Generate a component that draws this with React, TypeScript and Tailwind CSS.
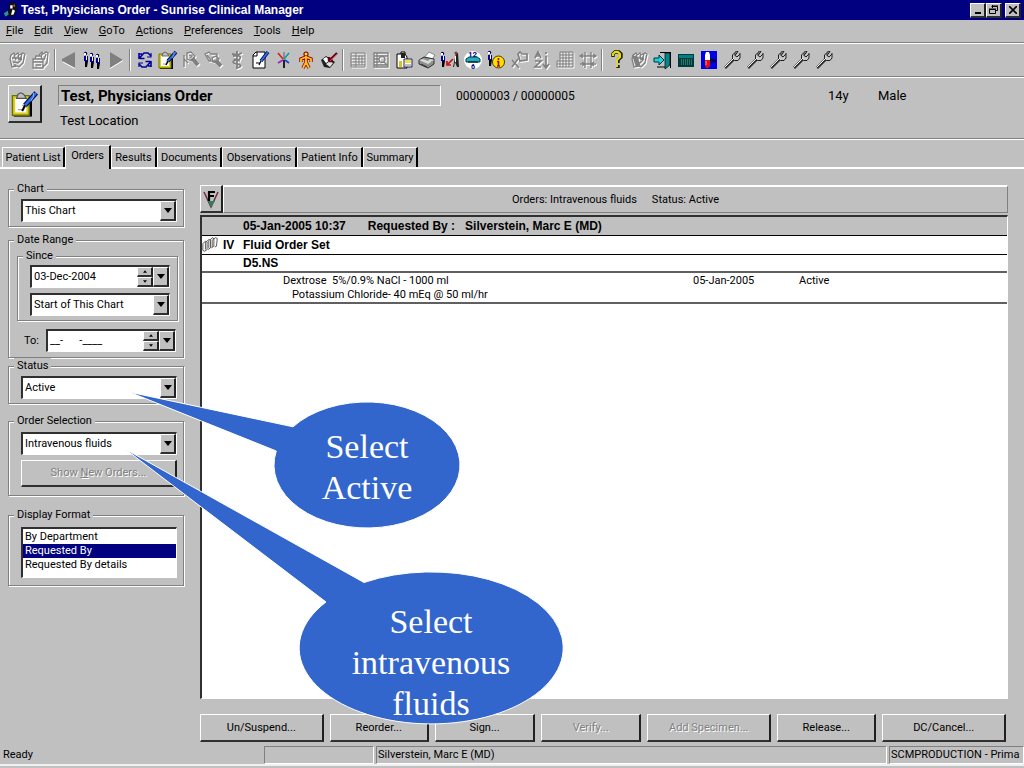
import { useState, type ReactNode } from "react";

const raised =
  "border-t border-l border-r-2 border-b-2 border-t-white border-l-white border-r-[#202020] border-b-[#303030] bg-[#c0c0c0]";
const sunken =
  "border-t-2 border-l-2 border-r border-b border-t-[#303030] border-l-[#303030] border-r-white border-b-white bg-white";
const rule = "border-b border-b-[#808080] shadow-[0_1px_0_#fff]";
const strong = "font-['Liberation_Sans',sans-serif] text-[12px] font-bold";

function Icon({ children, className = "w-5 h-5" }: { children: ReactNode; className?: string }) {
  return (
    <svg viewBox="0 0 20 20" className={className} fill="none" aria-hidden="true">
      {children}
    </svg>
  );
}

// greyed-out icons carry a white copy one pixel down and right
function Dim({ children }: { children: ReactNode }) {
  return (
    <Icon>
      <g transform="translate(1 1)" stroke="#fff" color="#fff" strokeWidth="1.3">
        {children}
      </g>
      <g stroke="#808080" color="#808080" strokeWidth="1.3">
        {children}
      </g>
    </Icon>
  );
}

function Clipboard({ className }: { className?: string }) {
  return (
    <Icon className={className}>
      <path d="M2 5h13v14H2z" fill="#000" />
      <path d="M1 4h12v14H1z" fill="#d8d020" stroke="#707000" />
      <path d="M3 6h8v10H3z" fill="#fff" />
      <path d="M4 6l1-3 2-1 2 1 2 3z" fill="#c0c0c0" stroke="#505050" strokeWidth=".8" />
      <path d="M8 11h3v1h-2v2H5" stroke="#a0a0a0" />
      <path d="M18 2l-8 9" stroke="#001060" strokeWidth="3.6" />
      <path d="M18 2l-8 9" stroke="#3070e0" strokeWidth="1.8" />
      <path d="M10 11l-2 4" stroke="#000" strokeWidth="1.4" />
      <path d="M16 2v3l-2 3" stroke="#90b8ff" strokeWidth=".7" />
    </Icon>
  );
}

function Person({ x, y = 0, c = "#0000a0" }: { x: number; y?: number; c?: string }) {
  return (
    <g transform={`translate(${x} ${y})`}>
      <circle cx="2.5" cy="2.5" r="1.7" fill="#000060" />
      <path d="M1 2h2v2H1z" fill="#fff" />
      <path d="M1 5h4v5H1z" fill={c} />
      <path d="M3 5h1v4H3z" fill="#fff" />
      <path d="M2 10h3l-1 6H2z" fill="#000" />
    </g>
  );
}

const cards = (
  <path d="M3 5l3-2 1 2 3-2 1 2 4-2 2 1-2 9-4 4-2-1-5 1-2-8zM6 5l2 5M10 5l1 5M14 4l-2 6M4 8h10M5 12l5 1 4-4M7 14v2" />
);

const icons = {
  orderSet: <Dim>{cards}</Dim>,
  folders: (
    <Dim>
      <path d="M8 5l3-3 1 2 3-2 2 1-1 10-4 4M2 9h10v9H2zM4 9l1-3h5l1 3M11 4l-1 3M15 4l-2 6M2 12h10M5 15h5" />
    </Dim>
  ),
  prev: (
    <Icon>
      <path d="M15 2v16L2 11V9z" fill="#808080" />
      <path d="M3 12l12 6.500" stroke="#fff" />
    </Icon>
  ),
  patients: (
    <Icon>
      <Person x={0} y={1} />
      <Person x={6} y={2} />
      <Person x={12} y={3} />
    </Icon>
  ),
  next: (
    <Icon>
      <path d="M4 2v16l13-8z" fill="#808080" />
      <path d="M4 18.500l13-8" stroke="#fff" />
    </Icon>
  ),
  refresh: (
    <Icon>
      <path d="M4 9V3M4 4h3M4.500 8.500h5M5 7.500L9 3h4l3 3" stroke="#0000a0" strokeWidth="1.600" />
      <path d="M16 11v6M16 16h-3M15.500 11.500h-5M15 12.500L11 17H7l-3-3" stroke="#0000a0" strokeWidth="1.600" />
      <path d="M16 3v4h-4M4 17v-4h4" stroke="#0000a0" strokeWidth="1.200" />
    </Icon>
  ),
  order: <Clipboard />,
  find: (
    <Dim>
      <path d="M3 5v12M3 9l4 4M6 3l4-1 4 4-3 5-5-2zM8 5l3 1-2 2" />
      <path d="M11 8l6 7" strokeWidth="4" />
    </Dim>
  ),
  findFolder: (
    <Dim>
      <path d="M1 4l4-2 2 2h6v7H5zM8 8l4-2 3 3-2 4-4-1zM3 5l4 5" />
      <path d="M12 11l5 5" strokeWidth="4" />
    </Dim>
  ),
  caduceus: (
    <Dim>
      <path d="M10 1v18M5 4l5 1 5-2M6 6c10-2 8 4 4 4s-6 3 0 4 4 3 0 4M7 9l6 2M7 13l6 2" strokeWidth="1.800" />
    </Dim>
  ),
  note: (
    <Icon>
      <path d="M3 5l3-3h9v16H3z" fill="#fff" stroke="#000" />
      <path d="M3 6h4V2" stroke="#000" />
      <path d="M18 2l-7 9" stroke="#001060" strokeWidth="3.600" />
      <path d="M18 2l-7 9" stroke="#3070e0" strokeWidth="1.800" />
      <path d="M11 11l-2 4M6 13h4" stroke="#000" strokeWidth="1.200" />
    </Icon>
  ),
  branches: (
    <Icon>
      <path d="M11 10v8" stroke="#202020" strokeWidth="2" />
      <path d="M11 10V2" stroke="#606060" />
      <path d="M10 9L5 3" stroke="#d02020" strokeWidth="1.600" />
      <path d="M11 9l5-6" stroke="#00a0a0" strokeWidth="1.600" />
      <path d="M10 10l-5 3" stroke="#a020c0" strokeWidth="1.600" />
      <path d="M12 10l4 3" stroke="#2040d0" strokeWidth="1.600" />
    </Icon>
  ),
  body: (
    <Icon>
      <path d="M10 6v6M10 7L5 9v3M10 7l5 2v3M10 12l-3 6M10 12l3 6" stroke="#900000" strokeWidth="3.400" />
      <circle cx="10" cy="4" r="2.600" fill="#900000" />
      <path d="M10 6v6M10 7L5 9v3M10 7l5 2v3M10 12l-3 6M10 12l3 6" stroke="#ffc020" strokeWidth="1.800" />
      <circle cx="10" cy="4" r="1.500" fill="#ffe040" />
    </Icon>
  ),
  book: (
    <Icon>
      <path d="M2 10l5-4 9 6-5 6-6-1z" fill="#202020" />
      <path d="M4 9l3-2 4 3-4 3z" fill="#fff" />
      <path d="M7 14l4-3 3 2-3 4z" fill="#e0e0e0" />
      <path d="M18 3l-8 8M10 11v-4M10 11h4" stroke="#600010" strokeWidth="2.400" />
      <path d="M18 4l-7 7" stroke="#d05060" />
    </Icon>
  ),
  sheet: (
    <Dim>
      <path d="M3 3h14v14H3zM3 6h14M3 9h14M3 12h14M3 15h14M8 3v14M11 6v9M14 6v9" strokeWidth="1" />
    </Dim>
  ),
  sheetFind: (
    <Dim>
      <path d="M3 3h14v14H3zM3 6h14M3 9h5M3 12h5M3 15h14M6 3v14M13 12l4 4" />
      <circle cx="11" cy="9.500" r="3" />
    </Dim>
  ),
  report: (
    <Icon>
      <path d="M3 4h4V2h4v2l2 3v11H3z" fill="#fff" stroke="#000" />
      <path d="M7 3h4v5H7z" fill="#202020" />
      <path d="M5 11h3v6H5z" fill="#e0c020" />
      <path d="M10 9h8v8h-8z" fill="#fff" stroke="#202060" />
      <path d="M11 10h6v3h-6z" fill="#f0e040" />
      <path d="M11 15h6" stroke="#808080" />
    </Icon>
  ),
  print: (
    <Icon>
      <path d="M7 8l5-6 6 3-4 6z" fill="#fff" stroke="#606060" strokeWidth=".7" />
      <path d="M2 10l5-3 10 2v5l-6 4-9-4z" fill="#909090" stroke="#303030" />
      <path d="M2 10l9 4 6-4-4-1-2 2-5-2z" fill="#d8d8d8" />
      <path d="M4 14l6 3" stroke="#303030" />
      <path d="M14 12h1" stroke="#40c040" strokeWidth="1.500" />
    </Icon>
  ),
  transfer: (
    <Icon>
      <Person x={0} y={1} />
      <path d="M16 3h2l1 14h-2l-2-5-1 5h-1z" fill="#202020" />
      <circle cx="16" cy="3" r="1.600" fill="#804040" />
      <path d="M15 6h1v6h-1z" fill="#fff" />
      <path d="M13 9l-6 6M7 11v4h4" stroke="#d01010" strokeWidth="1.700" />
    </Icon>
  ),
  schedule: (
    <Icon>
      <circle cx="10" cy="10" r="9" fill="#fff" />
      <text x="5" y="7" fontSize="8" fontWeight="bold" fill="#000080">12</text>
      <text x="8" y="19" fontSize="7" fontWeight="bold" fill="#000080">6</text>
      <path d="M3 9l3-2h8l3 2v3H3z" fill="#20b0c0" stroke="#004050" />
      <path d="M5 12h10" stroke="#000" />
    </Icon>
  ),
  info: (
    <Icon>
      <Person x={1} y={0} />
      <circle cx="12.500" cy="12" r="6" fill="#ffe000" stroke="#404000" />
      <path d="M12.500 8v2M12.500 11v5M11 16h3M11 11.500h2" stroke="#c00000" strokeWidth="1.600" />
    </Icon>
  ),
  flag: (
    <Dim>
      <path d="M9 4l2-2 2 2h5v6l-7 1zM9 9l-6 8M3 10l7 8" strokeWidth="1.700" />
    </Dim>
  ),
  sort: (
    <Dim>
      <path d="M3 8l3-6 3 6M4 6h4M3 11h6l-6 6h6M14 2v2M14 6v11M11 14l3 4 3-4" strokeWidth="1.700" />
    </Dim>
  ),
  grid: (
    <Dim>
      <path d="M5 2h13v15H5zM5 5h13M5 8h13M2 11h16M2 14h16M8 2v15M11 2v15M14 2v15M2 11v6h3" strokeWidth="1" />
    </Dim>
  ),
  collapse: (
    <Dim>
      <path d="M2 6h16M2 14h16M7 2v16M13 2v16M5 4L2 6l3 2M15 4l3 2-3 2M4 12l3 2-3 2M16 12l-3 2 3 2" />
    </Dim>
  ),
  help: (
    <Icon>
      <path d="M6 7V4l2-2h4l2 2v3l-3 3v3M11 15v3" stroke="#202000" strokeWidth="3.400" />
      <path d="M6 6V4l2-2h3l2 2v3l-3 3v3M10 15v2" stroke="#e8e000" strokeWidth="2" />
    </Icon>
  ),
  cardStack: (
    <Dim>
      {cards}
      <path d="M3 6l3 9 4 1-3-9z" fill="currentColor" />
    </Dim>
  ),
  exit: (
    <Icon>
      <path d="M7 2h11v16h-1V3H7z" fill="#000" />
      <path d="M12 3h5v12l-5 4z" fill="#008890" stroke="#000" strokeWidth=".7" />
      <path d="M1 8h5V5l5 5-5 5v-3H1z" fill="#20d0d8" stroke="#003040" />
      <path d="M4 17h8" stroke="#000" />
    </Icon>
  ),
  keypad: (
    <Icon>
      <path d="M2 4h16v13H2z" fill="#003c3c" />
      <path d="M3 5h14v3H3z" fill="#008080" />
      <path d="M5 10h11M5 12h11M5 14h11" stroke="#50b0a0" strokeDasharray="1 1" />
    </Icon>
  ),
  tube: (
    <Icon>
      <path d="M2 1h16v18H2z" fill="#0000e8" />
      <path d="M11 7l3 2h3v4l-3-1-3 2z" fill="#000060" />
      <path d="M6 5l1-3h3l1 3v5H6z" fill="#fff" />
      <path d="M6 10h5v6l-2 2H7l-1-2z" fill="#e01010" />
      <path d="M7 11v4" stroke="#ff9090" />
    </Icon>
  ),
  wrench: (
    <Icon>
      <path d="M3 18L12 9" stroke="#303030" strokeWidth="2.800" />
      <path d="M13 2.500L10.500 5v4l2 1.500h3.500L18 8V4l-3 3-2-1.500z" fill="#c8c8c8" stroke="#202020" />
      <path d="M13 2l3-.5-3 4M18 4V3" stroke="#202020" />
      <path d="M2.500 17.500L12 8" stroke="#f0f0f0" />
    </Icon>
  ),
};

type IconName = keyof typeof icons;

const toolbar: { label: string; icon: IconName; disabled?: boolean }[][] = [
  [
    { label: "Order sets", icon: "orderSet", disabled: true },
    { label: "Folders", icon: "folders", disabled: true },
  ],
  [
    { label: "Previous patient", icon: "prev" },
    { label: "Patients", icon: "patients" },
    { label: "Next patient", icon: "next" },
  ],
  [
    { label: "Refresh", icon: "refresh" },
    { label: "Enter order", icon: "order" },
    { label: "Find", icon: "find", disabled: true },
    { label: "Find document", icon: "findFolder", disabled: true },
    { label: "Clinical", icon: "caduceus", disabled: true },
    { label: "Enter document", icon: "note" },
    { label: "Allergies", icon: "branches" },
    { label: "Health issues", icon: "body" },
    { label: "References", icon: "book" },
  ],
  [
    { label: "Worksheet", icon: "sheet", disabled: true },
    { label: "Search worksheet", icon: "sheetFind", disabled: true },
    { label: "Report", icon: "report" },
    { label: "Print", icon: "print" },
    { label: "Transfer", icon: "transfer" },
    { label: "Schedule", icon: "schedule" },
    { label: "Patient details", icon: "info" },
    { label: "Flag", icon: "flag", disabled: true },
    { label: "Sort", icon: "sort", disabled: true },
    { label: "Grid", icon: "grid", disabled: true },
    { label: "Collapse", icon: "collapse", disabled: true },
  ],
  [
    { label: "Help", icon: "help" },
    { label: "Stack", icon: "cardStack", disabled: true },
    { label: "Exit", icon: "exit" },
    { label: "Keypad", icon: "keypad" },
    { label: "Specimen", icon: "tube" },
    { label: "Tool 1", icon: "wrench" },
    { label: "Tool 2", icon: "wrench" },
    { label: "Tool 3", icon: "wrench" },
    { label: "Tool 4", icon: "wrench" },
    { label: "Tool 5", icon: "wrench" },
  ],
];

const menus = ["File", "Edit", "View", "GoTo", "Actions", "Preferences", "Tools", "Help"];

const tabs = [
  { name: "Patient List", width: "w-[63px]" },
  { name: "Orders", width: "w-[46px]" },
  { name: "Results", width: "w-[46px]" },
  { name: "Documents", width: "w-[65px]" },
  { name: "Observations", width: "w-[75px]" },
  { name: "Patient Info", width: "w-[66px]" },
  { name: "Summary", width: "w-[55px]" },
];

const actions = [
  { name: "Un/Suspend...", width: "grow-[124]" },
  { name: "Reorder...", width: "grow-[99]" },
  { name: "Sign...", width: "grow-[100]" },
  { name: "Verify...", width: "grow-[100]", disabled: true },
  { name: "Add Specimen...", width: "grow-[124]", disabled: true },
  { name: "Release...", width: "grow-[99]" },
  { name: "DC/Cancel...", width: "grow-[124]" },
];

function Arrow({ up = false, small = false }: { up?: boolean; small?: boolean }) {
  return (
    <svg viewBox="0 0 8 5" className={small ? "w-1 h-[3px]" : "w-2 h-[5px]"} aria-hidden="true">
      <path d={up ? "M0 5h8L4 0z" : "M0 0h8L4 5z"} fill="#000" />
    </svg>
  );
}

function Group({
  title,
  className,
  inner,
  children,
}: {
  title: string;
  className: string;
  inner: string;
  children: ReactNode;
}) {
  return (
    <fieldset
      className={`min-w-0 border border-[#808080] shadow-[1px_1px_0_#fff,inset_1px_1px_0_#fff] ${className}`}
    >
      <legend className="ml-[5px] h-4 bg-[#c0c0c0] px-[3px] leading-4">{title}</legend>
      <div className={inner}>{children}</div>
    </fieldset>
  );
}

function Combo({ label, options }: { label: string; options: string[] }) {
  return (
    <div className={`relative flex h-[23px] ${sunken}`}>
      <select aria-label={label} className="w-full appearance-none bg-white pl-[2px] pr-4 outline-none">
        {options.map((o) => (
          <option key={o}>{o}</option>
        ))}
      </select>
      <span
        className={`pointer-events-none absolute inset-y-0 right-0 flex w-4 items-center justify-center ${raised}`}
      >
        <Arrow />
      </span>
    </div>
  );
}

function DateBox({ id, label, value }: { id: string; label: string; value: string }) {
  return (
    <div className={`flex h-[23px] min-w-0 flex-1 ${sunken}`}>
      <input id={id} aria-label={label} defaultValue={value} className="w-0 flex-1 bg-white pl-[2px] outline-none" />
      <div className="flex w-4 flex-col">
        <button aria-label="Later" className={`flex flex-1 items-center justify-center ${raised}`}>
          <Arrow up small />
        </button>
        <button aria-label="Earlier" className={`flex flex-1 items-center justify-center ${raised}`}>
          <Arrow small />
        </button>
      </div>
      <button aria-label="Open calendar" className={`flex w-4 items-center justify-center ${raised}`}>
        <Arrow />
      </button>
    </div>
  );
}

function Sidebar() {
  return (
    <aside className="w-[176px] shrink-0 pt-3">
      <Group title="Chart" className="h-[46px]" inner="pl-3 pr-[6px] pt-[2px]">
        <Combo label="Chart" options={["This Chart", "All Charts"]} />
      </Group>
      <Group title="Date Range" className="mt-[5px] h-[126px]" inner="pl-2 pr-[5px]">
        <Group title="Since" className="h-[73px]" inner="pl-3 pr-[7px] pt-px">
          <DateBox id="since" label="Since" value="03-Dec-2004" />
          <div className="mt-[5px]">
            <Combo label="Since preset" options={["Start of This Chart", "Today"]} />
          </div>
        </Group>
        <div className="mt-2 flex items-center pr-[2px] pl-[7px]">
          <label htmlFor="to" className="w-[22px]">To:</label>
          <DateBox id="to" label="To" value="__-      -____" />
        </div>
      </Group>
      <Group title="Status" className="h-[46px]" inner="pl-3 pr-[6px] pt-[2px]">
        <Combo label="Status" options={["Active", "All"]} />
      </Group>
      <Group title="Order Selection" className="mt-[9px] h-[83px]" inner="pl-3 pr-[6px] pt-[3px]">
        <Combo label="Order Selection" options={["Intravenous fluids", "All orders"]} />
        <button
          disabled
          className={`mt-[5px] h-[27px] w-full text-[#808080] [text-shadow:1px_1px_0_#fff] ${raised}`}
        >
          Show <u>N</u>ew Orders...
        </button>
      </Group>
      <Group title="Display Format" className="mt-[11px] h-[79px]" inner="pl-3 pr-[6px] pt-1">
        <select
          size={3}
          aria-label="Display Format"
          defaultValue="Requested By"
          className={`block h-[51px] w-full overflow-hidden pt-px outline-none ${sunken} [&>option]:h-[14px] [&>option]:min-h-0 [&>option]:px-[2px] [&>option]:py-0 [&>option]:leading-[14px] [&>option:checked]:bg-[linear-gradient(#000080,#000080)] [&>option:checked]:text-white`}
        >
          <option>By Department</option>
          <option>Requested By</option>
          <option>Requested By details</option>
        </select>
      </Group>
    </aside>
  );
}

function Orders() {
  return (
    <section className="flex min-w-0 flex-1 flex-col">
      <div className="mt-4 flex h-[28px]">
        <button aria-label="Filter" className={`flex w-[23px] items-center justify-center ${raised}`}>
          <Icon>
            <path d="M3 3l7 15 7-15" stroke="#703040" strokeWidth="1.500" />
            <path d="M7 12h7l-4 6z" fill="#308060" />
            <path d="M8 12V3M7 3h7M8 7h5" stroke="#000" strokeWidth="2.200" />
          </Icon>
        </button>
        <div className="flex flex-1 items-center justify-center gap-[15px] border border-t-2 border-white border-r-[#808080] border-b-[#808080]">
          <span>Orders: Intravenous fluids</span>
          <span>Status: Active</span>
        </div>
      </div>
      <div className={`mt-0.5 min-h-[483px] flex-1 ${sunken}`}>
        <table className="w-full table-fixed border-collapse">
          <colgroup>
            <col className="w-[41px]" />
            <col />
            <col className="w-[106px]" />
            <col className="w-[208px]" />
          </colgroup>
          <thead>
            <tr className="h-[18px] border-b border-black bg-[#c0c0c0]">
              <th />
              <th colSpan={3} className={`p-0 text-left ${strong}`}>
                <span className="mr-[22px]">05-Jan-2005 10:37</span>
                <span className="mr-[10px]">Requested By :</span>
                <span>Silverstein, Marc E (MD)</span>
              </th>
            </tr>
          </thead>
          <tbody>
            <tr className={`h-[19px] border-b border-black ${strong}`}>
              <td className="p-0">
                <span className="flex items-center gap-1">
                  <Icon className="h-[17px] w-[17px]">
                    <path
                      d="M1 9l3-3 2 1v9l-3 2-2-1zM5 7l3-3 2 1v9l-3 2M9 5l3-3 2 1v9l-3 2M13 4l3-2 2 1-1 9-2 1M4 7v9M8 5v9M12 4v9"
                      stroke="#404040"
                      fill="#fff"
                    />
                  </Icon>
                  IV
                </span>
              </td>
              <td colSpan={3} className="p-0">Fluid Order Set</td>
            </tr>
            <tr className={`h-[18px] border-b-2 border-[#606060] ${strong}`}>
              <td />
              <td colSpan={3} className="p-0">D5.NS</td>
            </tr>
            <tr className="h-[31px] border-b-2 border-[#606060] align-top leading-[14px]">
              <td />
              <td className="p-0 pt-px pl-10">
                <div>Dextrose&nbsp; 5%/0.9% NaCl - 1000 ml</div>
                <div className="pl-[9px]">Potassium Chloride- 40 mEq @ 50 ml/hr</div>
              </td>
              <td className="p-0 pt-px">05-Jan-2005</td>
              <td className="p-0 pt-px">Active</td>
            </tr>
          </tbody>
        </table>
      </div>
      <div className="mt-[15px] mb-1 flex gap-[6px] pr-0.5">
        {actions.map((a) => (
          <button
            key={a.name}
            disabled={a.disabled}
            className={`h-[28px] basis-0 whitespace-nowrap ${a.width} ${raised} ${
              a.disabled ? "text-[#808080] [text-shadow:1px_1px_0_#fff]" : ""
            }`}
          >
            {a.name}
          </button>
        ))}
      </div>
    </section>
  );
}

const callout = "absolute pointer-events-none font-['Liberation_Serif',serif] text-[34px] leading-[41px] text-white text-center";

export default function App() {
  const [tab, setTab] = useState("Orders");

  return (
    <div className="relative flex min-h-screen flex-col overflow-hidden bg-[#c0c0c0] font-['Roboto',sans-serif] text-[11px] leading-4 text-black">
      <header className="flex h-5 items-center bg-[#000080] pl-[3px] pr-[3px] text-white">
        <Icon className="h-4 w-4">
          <path d="M8 1h8l2 6-4 11H6l1-7z" fill="#101010" />
          <path d="M9 4h3v4H9zM12 9l3 2-2 5h-3z" fill="#fff" />
          <path d="M1 14l5-3 1 5-4 2z" fill="#309090" />
          <path d="M13 3h2v3h-2z" fill="#a06060" />
        </Icon>
        <h1 className={`flex-1 pl-0.5 ${strong}`}>Test, Physicians Order - Sunrise Clinical Manager</h1>
        <div className="flex">
          <button aria-label="Minimize" className={`flex h-[15px] w-4 items-end justify-center pb-0.5 ${raised}`}>
            <span className="h-0.5 w-[6px] bg-black" />
          </button>
          <button aria-label="Restore" className={`flex h-[15px] w-4 items-center justify-center ${raised}`}>
            <svg viewBox="0 0 10 10" className="h-[10px] w-[10px]" fill="none" stroke="#000">
              <path d="M3 1h6M3.500 0v3M2.500 1.500h6v4h-2M.5 4.500h6v4h-6zM0 4h7" />
            </svg>
          </button>
          <button aria-label="Close" className={`ml-[3px] flex h-[15px] w-4 items-center justify-center ${raised}`}>
            <svg viewBox="0 0 8 8" className="h-2 w-2" stroke="#000" strokeWidth="1.600">
              <path d="M0 0l8 8M8 0L0 8" />
            </svg>
          </button>
        </div>
      </header>

      <nav className={`flex h-[23px] items-center gap-[11px] pl-[6px] ${rule}`}>
        {menus.map((m) => (
          <button key={m}>
            <u>{m[0]}</u>
            {m.slice(1)}
          </button>
        ))}
      </nav>

      <div className={`flex h-[34px] items-center pl-[6px] ${rule}`}>
        {toolbar.map((group, i) => (
          <div key={i} className="flex items-center">
            {i > 0 && <span className="mx-[2px] h-[22px] w-[2px] border-l border-l-[#808080] bg-white" />}
            {group.map((t) => (
              <button key={t.label} aria-label={t.label} disabled={t.disabled} className="flex w-[23px] justify-center">
                {icons[t.icon]}
              </button>
            ))}
          </div>
        ))}
      </div>

      <div className={`flex h-[62px] pt-2 pl-2 text-[13px] ${rule}`}>
        <button aria-label="Enter order" className={`flex h-[38px] w-[34px] items-center justify-center ${raised}`}>
          <Clipboard className="h-7 w-7" />
        </button>
        <div className="ml-4 flex-1">
          <div className="flex items-center">
            <div className="h-[21px] w-[383px] border border-[#808080] border-r-white border-b-white pl-[2px] text-[15px] leading-5 font-bold">
              Test, Physicians Order
            </div>
            <div className="ml-[15px] flex-1 text-[12px]">00000003 / 00000005</div>
            <div className="w-[50px]">14y</div>
            <div className="w-[146px]">Male</div>
          </div>
          <div className="pt-[7px] pl-[2px]">Test Location</div>
        </div>
      </div>

      <div role="tablist" className="flex h-[30px] items-end border-b-2 border-white pl-[2px]">
        {tabs.map((t) => (
          <button
            key={t.name}
            role="tab"
            aria-selected={t.name === tab}
            onClick={() => setTab(t.name)}
            className={`border-t border-l border-r-2 border-t-white border-l-white border-r-black whitespace-nowrap ${t.width} ${
              t.name === tab ? "-mb-0.5 h-[24px] bg-[#c0c0c0] pb-1" : "h-5"
            }`}
          >
            {t.name}
          </button>
        ))}
      </div>

      <main className="flex flex-1 gap-4 pr-4 pl-2">
        <Sidebar />
        <Orders />
      </main>

      <footer className="mb-[2px] flex h-5 gap-[2px] border-b-2 border-b-[#f0f0f0]">
        <div className="w-[262px] pl-[3px] leading-[18px]">Ready</div>
        <div className="h-[18px] w-[110px] border border-[#808080] border-r-white border-b-white" />
        <div className="h-[18px] flex-1 border border-[#808080] border-r-white border-b-white pl-px">
          Silverstein, Marc E (MD)
        </div>
        <div className="h-[18px] w-[135px] overflow-hidden border border-[#808080] border-r-white border-b-white pl-px whitespace-nowrap">
          SCMPRODUCTION - Prima
        </div>
      </footer>

      <div className={`${callout} top-[390px] left-[128px] h-[140px] w-[334px]`}>
        <svg viewBox="0 0 334 140" className="absolute inset-0" fill="#3366cc" stroke="#fff">
          <path d="M1 2L165 36.800A93 63 0 1 1 148.300 61Z" strokeLinejoin="round" />
        </svg>
        <p className="relative pt-9 pl-[144px]">
          Select
          <br />
          Active
        </p>
      </div>
      <div className={`${callout} top-[448px] left-[124px] h-[278px] w-[440px]`}>
        <svg viewBox="0 0 440 278" className="absolute inset-0" fill="#3366cc" stroke="#fff">
          <path d="M1 1L240 134.500A132 76 0 1 1 202 154Z" strokeLinejoin="round" />
        </svg>
        <p className="relative pt-[153px] pl-[174px]">
          Select
          <br />
          intravenous
          <br />
          fluids
        </p>
      </div>
    </div>
  );
}
